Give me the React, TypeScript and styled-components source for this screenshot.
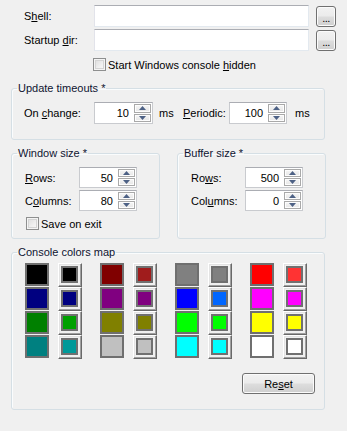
import React from 'react';
import styled, { createGlobalStyle } from 'styled-components';

const GlobalStyle = createGlobalStyle`
  html, body { margin: 0; padding: 0; background: #f0f0f0; }
  body {
    font-family: "Liberation Sans", Arial, sans-serif;
    font-size: 11px;
    color: #000;
  }
`;

const Page = styled.div`
  width: 347px;
  height: 431px;
  box-sizing: border-box;
  padding: 5px 0 0 11px;
  background: #f0f0f0;
`;

const PathGrid = styled.div`
  display: grid;
  grid-template-columns: 70px 215px 27px;
  grid-auto-rows: 22px;
  row-gap: 2px;
  margin-left: 13px;
  align-items: center;
`;

const Label = styled.span<{ $w?: number }>`
  display: inline-block;
  white-space: nowrap;
  ${p => (p.$w ? `width: ${p.$w}px; flex: 0 0 ${p.$w}px;` : '')}
`;

const Key = styled.span`
  text-decoration: underline;
  text-underline-offset: 1px;
`;

const TextEdit = styled.div`
  height: 22px;
  box-sizing: border-box;
  border: 1px solid #e3e9ef;
  border-top-color: #abadb3;
  border-left-color: #e2e3ea;
  background: #fff;
`;

const WinButton = styled.button<{ $w: number; $h: number }>`
  width: ${p => p.$w}px;
  height: ${p => p.$h}px;
  box-sizing: border-box;
  margin: 0;
  padding: 0;
  border: 1px solid #707070;
  border-radius: 3px;
  background: linear-gradient(#f2f2f2 0%, #ebebeb 48%, #dddddd 52%, #cfcfcf 100%);
  box-shadow: inset 0 0 0 1px #fbfbfb;
  font-family: inherit;
  font-size: 11px;
  color: #000;
  display: flex;
  align-items: center;
  justify-content: center;
`;

const DotsButton = styled(WinButton)`
  justify-self: end;
  align-items: flex-end;
  padding-bottom: 4px;
  line-height: 8px;
  letter-spacing: -0.5px;
`;

const CheckRow = styled.label<{ $ml: number; $mt: number }>`
  display: flex;
  align-items: center;
  height: 13px;
  margin-left: ${p => p.$ml}px;
  margin-top: ${p => p.$mt}px;
  white-space: nowrap;
`;

const CheckBox = styled.span`
  width: 13px;
  height: 13px;
  box-sizing: border-box;
  margin-right: 2px;
  border: 1px solid #8e8f8f;
  background: linear-gradient(135deg, #dadada 0%, #f0f0f0 60%, #fbfbfb 100%);
  box-shadow: inset 0 0 0 1px #f4f4f4, inset 0 0 0 2px #d4d4d4;
`;

const Group = styled.fieldset<{ $w: number; $mt: number }>`
  margin: ${p => p.$mt}px 0 0 0;
  padding: 0;
  min-width: 0;
  width: ${p => p.$w}px;
  box-sizing: border-box;
  border: 1px solid #d5dfe5;
  border-radius: 3px;
  box-shadow: inset 1px 1px 0 #fafcfd;
`;

const Legend = styled.legend`
  margin-left: 5px;
  padding: 0 1px;
  height: 15px;
  line-height: 15px;
  color: #0f1430;
  white-space: nowrap;
`;

const TimeoutRow = styled.div`
  display: flex;
  align-items: center;
  padding: 6px 0 15px 12px;
`;

const Unit = styled.span<{ $w: number; $ml: number }>`
  width: ${p => p.$w}px;
  margin-left: ${p => p.$ml}px;
  white-space: nowrap;
`;

const SpinBox = styled.div<{ $w: number; $h: number }>`
  display: flex;
  width: ${p => p.$w}px;
  height: ${p => p.$h}px;
  flex: 0 0 ${p => p.$w}px;
  box-sizing: border-box;
  border: 1px solid #c9cbcf;
  border-top-color: #abadb3;
  background: #fff;
  padding: 1px;
`;

const SpinValue = styled.div`
  flex: 1;
  display: flex;
  align-items: center;
  justify-content: flex-end;
  padding-right: 5px;
`;

const SpinButtons = styled.div`
  display: flex;
  flex-direction: column;
  width: 17px;
  gap: 1px;
`;

const SpinBtn = styled.div`
  flex: 1;
  box-sizing: border-box;
  border: 1px solid #a9a9a9;
  background: linear-gradient(#f6f6f6, #e6e6e6);
  box-shadow: inset 0 0 0 1px #fdfdfd;
  display: flex;
  align-items: center;
  justify-content: center;
`;

const SizeRow = styled.div`
  display: flex;
  gap: 17px;
  align-items: stretch;
`;

const SizeBody = styled.div`
  display: flex;
  flex-direction: column;
  gap: 2px;
  padding: 6px 0 8px 13px;
`;

const FieldLine = styled.div`
  display: flex;
  align-items: center;
`;

const ColorsBody = styled.div`
  display: flex;
  flex-direction: column;
  padding: 3px 9px 15px 13px;
`;

const ColorGrid = styled.div`
  display: flex;
  gap: 18px;
`;

const ColorGroup = styled.div`
  display: grid;
  grid-template-columns: 24px 24px;
  grid-auto-rows: 23px;
  column-gap: 9px;
  row-gap: 1px;
`;

const Swatch = styled.div<{ $c: string }>`
  width: 24px;
  height: 23px;
  box-sizing: border-box;
  border: 2px solid #6f6f6f;
  background: ${p => p.$c};
`;

const SwatchButton = styled.div`
  width: 24px;
  height: 24px;
  box-sizing: border-box;
  border-top: 1px solid #ffffff;
  border-left: 1px solid #ffffff;
  border-right: 1px solid #696969;
  border-bottom: 1px solid #696969;
  box-shadow: inset -1px -1px 0 #a0a0a0, inset 1px 1px 0 #e3e3e3;
  background: #f0f0f0;
  display: flex;
  align-items: center;
  justify-content: center;
  padding: 0 1px 1px 0;
`;

const SwatchInner = styled.div<{ $c: string }>`
  width: 17px;
  height: 17px;
  box-sizing: border-box;
  border: 2px solid #707070;
  background: ${p => p.$c};
`;

const ResetRow = styled.div`
  display: flex;
  justify-content: flex-end;
  margin-top: 15px;
`;

const Arrow: React.FC<{ up?: boolean }> = ({ up }) => (
  <svg width="7" height="4" viewBox="0 0 7 4">
    {up ? <polygon points="0,4 7,4 3.5,0" fill="#4d6185" /> : <polygon points="0,0 7,0 3.5,4" fill="#4d6185" />}
  </svg>
);

const Spin: React.FC<{ value: string; w: number; h: number }> = ({ value, w, h }) => (
  <SpinBox $w={w} $h={h}>
    <SpinValue>{value}</SpinValue>
    <SpinButtons>
      <SpinBtn><Arrow up /></SpinBtn>
      <SpinBtn><Arrow /></SpinBtn>
    </SpinButtons>
  </SpinBox>
);

const colorGroups: [string, string][][] = [
  [['#000000', '#000000'], ['#000080', '#000080'], ['#008000', '#00a000'], ['#008080', '#009999']],
  [['#800000', '#a01c1c'], ['#800080', '#800080'], ['#808000', '#808000'], ['#c0c0c0', '#c0c0c0']],
  [['#808080', '#808080'], ['#0000ff', '#0066ff'], ['#00ff00', '#00ff00'], ['#00ffff', '#00ffff']],
  [['#ff0000', '#ff3333'], ['#ff00ff', '#ff00ff'], ['#ffff00', '#ffff00'], ['#ffffff', '#ffffff']],
];

export default function App() {
  return (
    <>
      <GlobalStyle />
      <Page>
        <PathGrid>
          <Label>S<Key>h</Key>ell:</Label>
          <TextEdit />
          <DotsButton $w={20} $h={21}>...</DotsButton>
          <Label>Startup <Key>d</Key>ir:</Label>
          <TextEdit />
          <DotsButton $w={20} $h={21}>...</DotsButton>
        </PathGrid>

        <CheckRow $ml={82} $mt={7}>
          <CheckBox />
          <span>Start Windows console <Key>h</Key>idden</span>
        </CheckRow>

        <Group $w={314} $mt={10}>
          <Legend>Update timeouts *</Legend>
          <TimeoutRow>
            <Label $w={70}>On <Key>c</Key>hange:</Label>
            <Spin value="10" w={59} h={22} />
            <Unit $w={24} $ml={6}>ms</Unit>
            <Label $w={46}><Key>P</Key>eriodic:</Label>
            <Spin value="100" w={58} h={22} />
            <Unit $w={20} $ml={8}>ms</Unit>
          </TimeoutRow>
        </Group>

        <SizeRow>
          <Group $w={149} $mt={6}>
            <Legend>Window size *</Legend>
            <SizeBody>
              <FieldLine>
                <Label $w={54}><Key>R</Key>ows:</Label>
                <Spin value="50" w={58} h={21} />
              </FieldLine>
              <FieldLine>
                <Label $w={54}>C<Key>o</Key>lumns:</Label>
                <Spin value="80" w={58} h={21} />
              </FieldLine>
              <CheckRow $ml={1} $mt={4}>
                <CheckBox />
                <span>Save on exit</span>
              </CheckRow>
            </SizeBody>
          </Group>
          <Group $w={149} $mt={6}>
            <Legend>Buffer size *</Legend>
            <SizeBody>
              <FieldLine>
                <Label $w={54}>Ro<Key>w</Key>s:</Label>
                <Spin value="500" w={58} h={21} />
              </FieldLine>
              <FieldLine>
                <Label $w={54}>Col<Key>u</Key>mns:</Label>
                <Spin value="0" w={58} h={21} />
              </FieldLine>
            </SizeBody>
          </Group>
        </SizeRow>

        <Group $w={314} $mt={6}>
          <Legend>Console colors map</Legend>
          <ColorsBody>
            <ColorGrid>
              {colorGroups.map((g, gi) => (
                <ColorGroup key={gi}>
                  {g.map(([base, custom], ri) => (
                    <React.Fragment key={ri}>
                      <Swatch $c={base} />
                      <SwatchButton><SwatchInner $c={custom} /></SwatchButton>
                    </React.Fragment>
                  ))}
                </ColorGroup>
              ))}
            </ColorGrid>
            <ResetRow>
              <WinButton $w={73} $h={21}>Re<Key>s</Key>et</WinButton>
            </ResetRow>
          </ColorsBody>
        </Group>
      </Page>
    </>
  );
}
